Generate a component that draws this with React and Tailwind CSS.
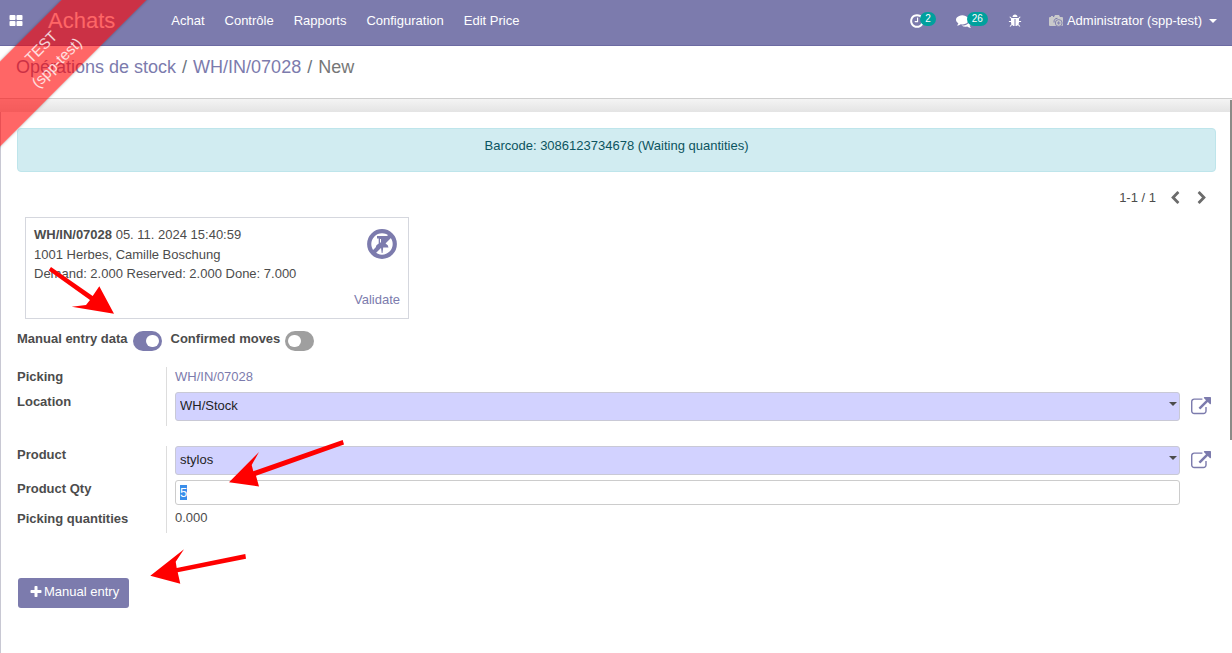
import React, { useState } from 'react';

const ICONS = {
    apps: 'M832 1024v384q0 52-38 90t-90 38h-512q-52 0-90-38t-38-90v-384q0-52 38-90t90-38h512q52 0 90 38t38 90zm0-768v384q0 52-38 90t-90 38h-512q-52 0-90-38t-38-90v-384q0-52 38-90t90-38h512q52 0 90 38t38 90zm896 768v384q0 52-38 90t-90 38h-512q-52 0-90-38t-38-90v-384q0-52 38-90t90-38h512q52 0 90 38t38 90zm0-768v384q0 52-38 90t-90 38h-512q-52 0-90-38t-38-90v-384q0-52 38-90t90-38h512q52 0 90 38t38 90z',
    clock: 'M1024 544v448q0 14-9 23t-23 9h-320q-14 0-23-9t-9-23v-64q0-14 9-23t23-9h224v-352q0-14 9-23t23-9h64q14 0 23 9t9 23zm416 352q0-148-73-273t-198-198-273-73-273 73-198 198-73 273 73 273 198 198 273 73 273-73 198-198 73-273zm224 0q0 209-103 385.5t-279.5 279.5-385.5 103-385.5-103-279.5-279.5-103-385.5 103-385.5 279.5-279.5 385.5-103 385.5 103 279.5 279.5 103 385.5z',
    comments: 'M1408 768q0 139-94 257t-256.5 186.5-353.5 68.5q-86 0-176-16-124 88-278 128-36 9-86 16h-3q-11 0-20.5-8t-11.5-21q-1-3-1-6.5t.5-6.5 2-6l2.5-5 3.5-5.5 4-5 4.5-5 4-4.5q5-6 23-25t26-29.5 22.5-29 25-38.5 20.5-44q-124-72-195-177t-71-224q0-139 94-257t256.5-186.5 353.5-68.5 353.5 68.5 256.5 186.5 94 257zm384 256q0 120-71 224.5t-195 176.5q10 24 20.5 44t25 38.5 22.5 29 26 29.5 23 25q1 1 4 4.5t4.5 5 4 5 3.5 5.5l2.5 5 2 6 .5 6.5-1 6.5q-3 14-13 22t-22 7q-50-7-86-16-154-40-278-128-90 16-176 16-271 0-472-132 58 4 88 4 161 0 309-45t264-129q125-92 192-212t67-254q0-77-23-152 129 71 204 178t75 230z',
    bug: 'M1696 960q0 26-19 45t-45 19h-224q0 171-67 290l208 209q19 19 19 45t-19 45q-18 19-45 19t-45-19l-198-197q-5 5-15 13t-42 28.5-65 36.5-82 29-97 13v-896h-128v896q-51 0-101.5-13.5t-87-33-66-39-43.5-32.5l-15-14-183 207q-20 21-48 21-24 0-43-16-19-18-20.5-44.5t15.5-46.5l202-227q-58-114-58-274h-224q-26 0-45-19t-19-45 19-45 45-19h224v-294l-173-173q-19-19-19-45t19-45 45-19 45 19l173 173h844l173-173q19-19 45-19t45 19 19 45-19 45l-173 173v294h224q26 0 45 19t19 45zm-480-576h-640q0-133 93.5-226.5t226.5-93.5 226.5 93.5 93.5 226.5z',
    external: 'M1408 928v320q0 119-84.5 203.5t-203.5 84.5h-832q-119 0-203.5-84.5t-84.5-203.5v-832q0-119 84.5-203.5t203.5-84.5h704q14 0 23 9t9 23v64q0 14-9 23t-23 9h-704q-66 0-113 47t-47 113v832q0 66 47 113t113 47h832q66 0 113-47t47-113v-320q0-14 9-23t23-9h64q14 0 23 9t9 23zm384-864v512q0 26-19 45t-45 19-45-19l-176-176-652 652q-10 10-23 10t-23-10l-114-114q-10-10-10-23t10-23l652-652-176-176q-19-19-19-45t19-45 45-19h512q26 0 45 19t19 45z',
    plus: 'M1600 736v192q0 40-28 68t-68 28h-416v416q0 40-28 68t-68 28h-192q-40 0-68-28t-28-68v-416h-416q-40 0-68-28t-28-68v-192q0-40 28-68t68-28h416v-416q0-40 28-68t68-28h192q40 0 68 28t28 68v416h416q40 0 68 28t28 68z',
    left: 'M1427 301l-531 531 531 531q19 19 19 45t-19 45l-166 166q-19 19-45 19t-45-19l-742-742q-19-19-19-45t19-45l742-742q19-19 45-19t45 19l166 166q19 19 19 45t-19 45z',
    right: 'M1363 877l-742 742q-19 19-45 19t-45-19l-166-166q-19-19-19-45t19-45l531-531-531-531q-19-19-19-45t19-45l166-166q19-19 45-19t45 19l742 742q19 19 19 45t-19 45z',
};

function Icon({ name, className }) {
    return (
        <svg viewBox="0 0 1792 1792" fill="currentColor" aria-hidden="true" className={className}>
            <path d={ICONS[name]} />
        </svg>
    );
}

function AvatarIcon() {
    return (
        <svg viewBox="0 0 14 12" aria-hidden="true" className="w-[14px] h-3">
            <path d="M1 2h1V1h2v1h1l1-2h4l1 2h2q1 0 1 1v7q0 1-1 1H1q-1 0-1-1V3q0-1 1-1z" fill="#c9c9cb" />
            <path d="M8.500 3.300q-3.700 0-3.500 4.200" fill="none" stroke="#7c7bad" strokeWidth="1" />
            <circle cx="9.700" cy="8" r="3.400" fill="#c9c9cb" stroke="#7c7bad" strokeWidth="0.900" />
            <path d="M9.700 6.300v3.400M8 8h3.400" stroke="#7c7bad" strokeWidth="0.900" />
        </svg>
    );
}

function UnpinIcon() {
    return (
        <svg viewBox="0 0 30 30" aria-hidden="true" className="w-[30px] h-[30px]">
            <path d="M10 7h10.500v2.500h-2v5q3 1.500 3 4H16.200l-.7 5.500h-.8L14 18.500H8.700q0-2.500 3-4v-5H10z" fill="#7c7bad" />
            <path d="M24 6L6 24" stroke="#7c7bad" strokeWidth="4" />
            <path d="M13.500 10v3.500" stroke="#fff" strokeWidth="1" />
            <circle cx="15" cy="15" r="12.800" fill="none" stroke="#7c7bad" strokeWidth="4.200" />
        </svg>
    );
}

function Systray({ icon, count, label }) {
    return (
        <button type="button" aria-label={label} className="flex items-center">
            <Icon name={icon} className="w-4 h-4" />
            <span className="relative z-10 -ml-[5px] mb-1 rounded-full bg-[#00a09d] px-[5px] text-[10px] leading-[14px]">{count}</span>
        </button>
    );
}

function Toggle({ id, label, checked, onChange }) {
    return (
        <div className="flex items-start">
            <label htmlFor={id} className="font-bold leading-5">{label}</label>
            <span className="relative ml-[5px] mt-[2px] flex">
                <input
                    id={id}
                    type="checkbox"
                    checked={checked}
                    onChange={(e) => onChange(e.target.checked)}
                    className="peer h-5 w-[29px] appearance-none rounded-full bg-[#9f9f9f] checked:bg-[#7c7bad]"
                />
                <span className="pointer-events-none absolute left-[3px] top-1 h-3 w-[13px] rounded-full bg-white peer-checked:left-[13px]" />
            </span>
        </div>
    );
}

function Many2one({ id, value }) {
    return (
        <div className="flex items-center gap-[11px]">
            <div className="relative flex-1">
                <select
                    id={id}
                    defaultValue={value}
                    className="block h-[29px] w-full appearance-none rounded-[3px] border border-[#c9c9d6] bg-[#d2d2ff] px-1 pb-[2px] text-[#1f1f1f] outline-none"
                >
                    <option>{value}</option>
                </select>
                <span className="pointer-events-none absolute right-[3px] top-[10px] border-x-4 border-t-4 border-x-transparent border-t-[#4c4c4c]" />
            </div>
            <button type="button" aria-label="External link" className="w-5 text-[#7c7bad]">
                <Icon name="external" className="h-5 w-5" />
            </button>
        </div>
    );
}

const MENU = ['Achat', 'Contrôle', 'Rapports', 'Configuration', 'Edit Price'];

export default function App() {
    const [manual, setManual] = useState(true);
    const [confirmed, setConfirmed] = useState(false);

    return (
        <div className="relative min-h-screen overflow-hidden bg-white font-['Liberation_Sans',Arial,sans-serif] text-[13px] leading-5 text-[#4c4c4c]">
            {/* Environment ribbon */}
            <div className="pointer-events-none absolute -left-[101px] top-[25px] z-20 h-[60px] w-[300px] -rotate-45 bg-[#ff0000]/60 pt-2 text-center text-[15px] leading-[22px] text-white/80 shadow-[0_0_3px_rgba(0,0,0,0.3)]">
                <p>TEST</p>
                <p>(spp-test)</p>
            </div>

            <header className="flex h-[46px] items-center border-b border-[#6c6aa2] bg-[#7c7bad] pb-[3px] pl-[9px] pr-[15px] text-white">
                <button type="button" aria-label="Applications">
                    <Icon name="apps" className="h-[14px] w-[14px]" />
                </button>
                <a href="#" className="ml-[25px] text-[22px] leading-6">Achats</a>
                <nav className="ml-14 flex gap-5">
                    {MENU.map((item) => (
                        <a key={item} href="#">{item}</a>
                    ))}
                </nav>
                <div className="ml-auto flex items-center">
                    <Systray icon="clock" count={2} label="Activities" />
                    <div className="ml-5">
                        <Systray icon="comments" count={26} label="Conversations" />
                    </div>
                    <button type="button" aria-label="Debug" className="ml-5">
                        <Icon name="bug" className="h-[14px] w-[14px]" />
                    </button>
                    <button type="button" className="ml-[27px] flex items-center">
                        <AvatarIcon />
                        <span className="ml-1">Administrator (spp-test)</span>
                        <span className="ml-[7px] border-x-4 border-t-4 border-x-transparent border-t-white" />
                    </button>
                </div>
            </header>

            <div className="h-[53px] border-b border-[#cfcfcf] px-4 pt-[9px] text-lg leading-6">
                <a href="#" className="text-[#7c7bad]">Opérations de stock</a>
                <span className="px-[6px] text-[#6c757d]">/</span>
                <a href="#" className="text-[#7c7bad]">WH/IN/07028</a>
                <span className="px-[6px] text-[#6c757d]">/</span>
                <span className="text-[#777777]">New</span>
            </div>
            <div className="h-[13px] bg-linear-to-b from-[#f4f4f4] to-[#e4e4e4]" />

            <main className="min-h-[541px] border-l border-[#c8c8d3] px-4 pt-4">
                <div role="alert" className="h-11 rounded-[4px] border border-[#bee5eb] bg-[#d1ecf1] pt-[7px] text-center text-[#0c5460]">
                    Barcode: 3086123734678 (Waiting quantities)
                </div>

                <div className="mt-4 flex items-center justify-end pr-[7px]">
                    <span>1-1 / 1</span>
                    <button type="button" aria-label="Previous" className="ml-3">
                        <Icon name="left" className="h-[14px] w-[14px] text-[#6b6b6b]" />
                    </button>
                    <button type="button" aria-label="Next" className="ml-[13px]">
                        <Icon name="right" className="h-[14px] w-[14px] text-[#6b6b6b]" />
                    </button>
                </div>

                <section className="ml-2 mt-[9px] flex h-[102px] w-[384px] justify-between border border-[#d5d7de] px-2 pt-[7px]">
                    <div>
                        <p><b>WH/IN/07028</b> 05. 11. 2024 15:40:59</p>
                        <p className="leading-[19px]">1001 Herbes, Camille Boschung</p>
                        <p>Demand: 2.000 Reserved: 2.000 Done: 7.000</p>
                    </div>
                    <div className="flex flex-col items-end justify-between pb-2 pt-1 text-[#7c7bad]">
                        <button type="button" aria-label="Unpin" className="mr-[3px]">
                            <UnpinIcon />
                        </button>
                        <button type="button">Validate</button>
                    </div>
                </section>

                <div className="mt-[10px] flex gap-[9px]">
                    <Toggle id="manual" label="Manual entry data" checked={manual} onChange={setManual} />
                    <Toggle id="confirmed" label="Confirmed moves" checked={confirmed} onChange={setConfirmed} />
                </div>

                <div className="mt-4 grid grid-cols-[149px_1fr] pr-[5px]">
                    <div className="flex flex-col gap-[5px] font-bold">
                        <span>Picking</span>
                        <label htmlFor="location">Location</label>
                    </div>
                    <div className="flex h-[59px] flex-col gap-[5px] border-l border-[#dddddd] pl-2">
                        <a href="#" className="text-[#7c7bad]">WH/IN/07028</a>
                        <Many2one id="location" value="WH/Stock" />
                    </div>
                </div>

                <div className="mt-5 grid grid-cols-[149px_1fr] pr-[5px]">
                    <div className="-mt-px flex flex-col font-bold">
                        <label htmlFor="product">Product</label>
                        <label htmlFor="qty" className="mt-[14px]">Product Qty</label>
                        <span className="mt-[10px]">Picking quantities</span>
                    </div>
                    <div className="flex h-[87px] flex-col border-l border-[#dddddd] pl-2">
                        <Many2one id="product" value="stylos" />
                        <div className="mt-[5px] pr-[31px]">
                            <input
                                id="qty"
                                type="text"
                                defaultValue="5"
                                autoFocus
                                onFocus={(e) => e.target.select()}
                                className="block h-[25px] w-full rounded-[3px] border border-[#cccccc] px-1 text-[#1f1f1f] outline-none selection:bg-[#3b8eea] selection:text-white"
                            />
                        </div>
                        <span className="mt-[3px]">0.000</span>
                    </div>
                </div>

                <button type="button" className="ml-px mt-[45px] flex h-[30px] items-center rounded-[3px] bg-[#7c7bad] pb-[3px] pl-[11px] pr-[10px] text-white">
                    <Icon name="plus" className="mr-px h-[14px] w-[14px]" />
                    Manual entry
                </button>
            </main>

            {/* Scrollbar thumb */}
            <div className="absolute right-0 top-[100px] h-[340px] w-[2px] bg-[#8b8b87]" />

            {/* Annotation arrows */}
            <svg width="400" height="653" fill="#ff0000" aria-hidden="true" className="pointer-events-none absolute left-0 top-0 z-30">
                <path d="M51 267L92.700 296L99.300 286.300L114 313.700L71.700 306.700L86 305L90 300L48.700 270.500z" />
                <path d="M342.700 440L344 444.500L256 475.700L259 486.500L229 482.300L259 452L251.700 465L253.300 471.300z" />
                <path d="M245.300 554L246 558.700L177.700 572.300L180.300 583.700L150.300 575.700L184 549.300L175.700 561.700L176.700 568z" />
            </svg>
        </div>
    );
}
